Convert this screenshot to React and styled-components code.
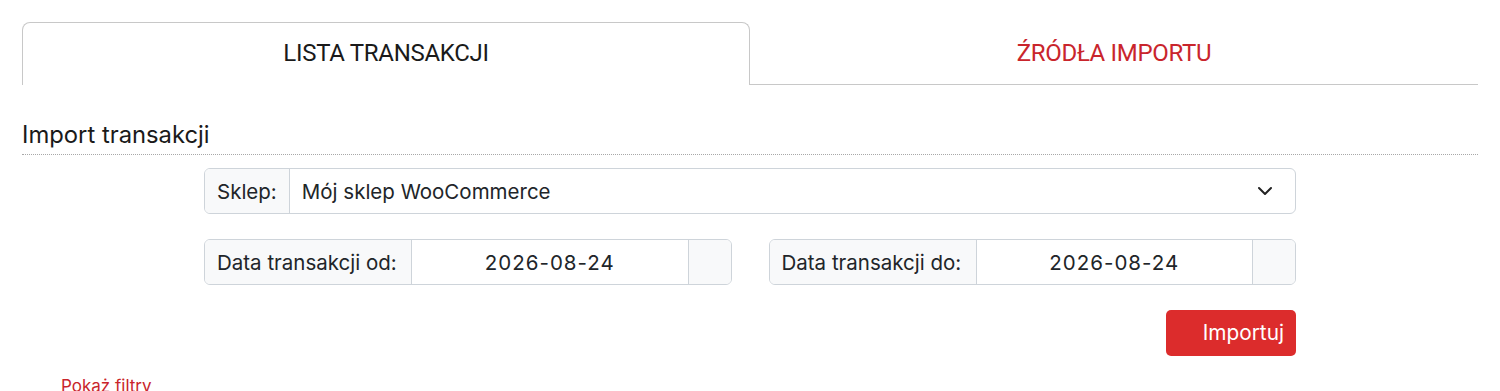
import React from "react";
import styled, { createGlobalStyle } from "styled-components";

const Global = createGlobalStyle`
  html, body { margin: 0; padding: 0; background: #fff; }
  body { font-family: "Inter", "Noto Sans", sans-serif; color: #212529; }
  * { box-sizing: border-box; }
`;

const Page = styled.div`
  padding: 22px 22px 0;
`;

const Tabs = styled.div`
  display: flex;
  border-bottom: 1px solid #c8c8c8;
  height: 63px;
`;

const Tab = styled.div`
  flex: 1;
  display: flex;
  align-items: center;
  justify-content: center;
  font-family: "Roboto", sans-serif;
  font-size: 24px;
  letter-spacing: -0.3px;
  padding-bottom: 2px;
  color: ${(p) => (p.$active ? "#1a1a1a" : "#c9252c")};
  border: 1px solid ${(p) => (p.$active ? "#c8c8c8" : "transparent")};
  border-bottom: none;
  border-radius: 8px 8px 0 0;
  background: #fff;
  margin-bottom: ${(p) => (p.$active ? "-1px" : "0")};
`;

const Heading = styled.h2`
  margin: 36px 0 0;
  font-size: 23.8px;
  font-weight: 400;
  line-height: 28px;
  padding-bottom: 5px;
  border-bottom: 1px dotted #a8a8a8;
  color: #1a1a1a;
`;

const Form = styled.div`
  width: 75%;
  margin: 13px auto 0;
  display: flex;
  flex-direction: column;
  gap: 25px;
`;

const Row = styled.div`
  display: flex;
  gap: 37px;
`;

const Group = styled.div`
  flex: ${(p) => (p.$grow ? "1 1 0" : "none")};
  display: flex;
  height: 46px;
  border: 1px solid #ced4da;
  border-radius: 6px;
  overflow: hidden;
  font-size: 20.5px;
`;

const Label = styled.div`
  display: flex;
  align-items: center;
  padding: 0 12px;
  background: #f8f9fa;
  border-right: 1px solid #ced4da;
  white-space: nowrap;
  width: ${(p) => p.$w || "auto"};
`;

const Select = styled.div`
  flex: 1;
  display: flex;
  align-items: center;
  justify-content: space-between;
  padding: 0 22px 0 12px;
`;

const DateValue = styled.div`
  flex: 1;
  display: flex;
  align-items: center;
  justify-content: center;
  letter-spacing: 1px;
  border-right: 1px solid #ced4da;
`;

const Addon = styled.div`
  width: 42px;
  background: #f8f9fa;
`;

const Actions = styled.div`
  display: flex;
  justify-content: flex-end;
`;

const Button = styled.button`
  width: 130px;
  height: 46px;
  border: none;
  border-radius: 5px;
  background: #dc2c2c;
  color: #fff;
  font-family: inherit;
  font-size: 20.8px;
  display: flex;
  align-items: center;
  justify-content: flex-end;
  padding: 0 12px 2px 0;
`;

const Link = styled.a`
  display: block;
  margin: 20px 0 0 39px;
  color: #c9252c;
  font-size: 17px;
  text-decoration: none;
`;

export default function App() {
  return (
    <>
      <Global />
      <Page>
        <Tabs>
          <Tab $active>LISTA TRANSAKCJI</Tab>
          <Tab>ŹRÓDŁA IMPORTU</Tab>
        </Tabs>
        <Heading>Import transakcji</Heading>
        <Form>
          <Group>
            <Label>Sklep:</Label>
            <Select>
              <span>Mój sklep WooCommerce</span>
              <svg width="16" height="10" viewBox="0 0 16 10" fill="none">
                <path d="M2 2l6 6 6-6" stroke="#222" strokeWidth="2" strokeLinecap="round" strokeLinejoin="round" />
              </svg>
            </Select>
          </Group>
          <Row>
            <Group $grow>
              <Label $w="207px">Data transakcji od:</Label>
              <DateValue>2026-08-24</DateValue>
              <Addon />
            </Group>
            <Group $grow>
              <Label $w="207px">Data transakcji do:</Label>
              <DateValue>2026-08-24</DateValue>
              <Addon />
            </Group>
          </Row>
          <Actions>
            <Button>Importuj</Button>
          </Actions>
        </Form>
        <Link href="#">Pokaż filtry</Link>
      </Page>
    </>
  );
}
